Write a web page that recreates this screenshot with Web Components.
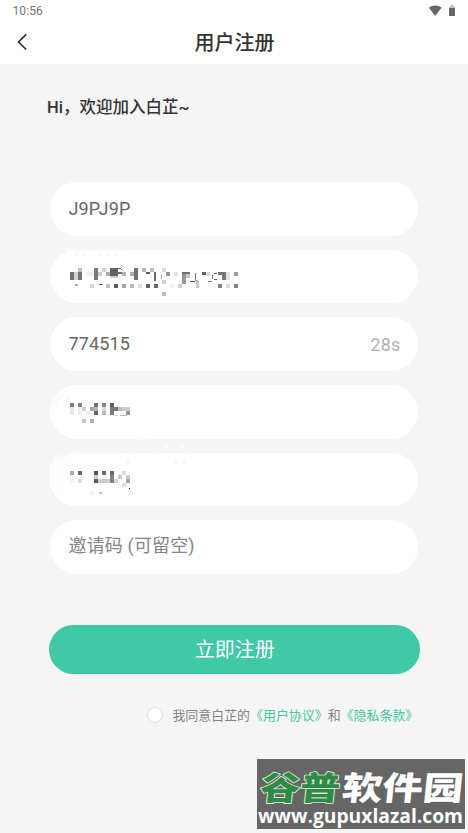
<!DOCTYPE html>
<html lang="zh-CN">
<head>
<meta charset="utf-8">
<title>用户注册</title>
<style>
html,body{margin:0;height:100%}
body{background:#f5f5f5;font-family:Roboto,"Noto Sans CJK SC",sans-serif;overflow:hidden}
</style>
</head>
<body>
<register-page></register-page>
<script>
const make = (name, html, after) => customElements.define(name, class extends HTMLElement {
  constructor() {
    super();
    this.attachShadow({ mode: 'open' }).innerHTML = html;
  }
  connectedCallback() { if (after) after(this, this.shadowRoot); }
});

make('status-bar', `<style>
:host{display:flex;height:20px;box-sizing:border-box;padding:1px 12px 0 12.5px;align-items:center;justify-content:space-between;background:#fff;color:#757575;font-size:12px;letter-spacing:.1px}
svg{display:block}
</style><span>10:56</span>
<svg width="28" height="14" viewBox="0 0 28 14"><path d="M.8 3.5Q7.2-.7 13.7 3.5L7.2 12Z" fill="#666"/><path d="M21.2 2.8h1.5V1h2.8v1.8H27V5h-5.8Z" fill="#bbb"/><rect x="21" y="4" width="6" height="8" rx=".6" fill="#666"/></svg>`);

make('title-bar', `<style>
:host{display:grid;grid-template-columns:60px 1fr 60px;height:44px;align-items:center;background:#fff;color:#333}
h1{margin:0;text-align:center;font-size:20px;line-height:42px;padding:2px 0 0 1px;font-weight:500}
svg{display:block;margin-left:16px}
</style><svg width="13" height="18" viewBox="0 0 13 18"><path d="M10.2 1.3 2.5 9l7.7 7.5" fill="none" stroke="#333" stroke-width="1.7"/></svg><h1><slot></slot></h1>`);

make('form-field', `<style>
:host{display:flex;box-sizing:border-box;height:53.6px;border-radius:27px;background:#fff;padding:0 17.5px 0 18.5px;align-items:center;justify-content:space-between;color:#666;font-size:18px;line-height:26px;letter-spacing:.15px;position:relative}
:host([placeholder]){color:#858585;padding-bottom:2px}
.end{color:#b2b2b2;padding-top:1px}
</style><span><slot></slot></span><span class="end"><slot name="end"></slot></span>`);

/* Mosaic cells: "x y w h grey" in page units, relative to the field's left and top corner. */
const mosaics = {
  account: `16 -2 14 3 249,32 -2 40 3 249,25 2 4 4 249,32 2 4 4 249,48 2 4 4 249,56 2 4 4 249,64 2 4 4 249,
20 22 4 8 112,24 22 4 8 210,28 18 4 4 190,28 22 4 8 116,25 34 3 2 170,36 22 8 4 240,44 18 4 12 120,48 22 4 4 205,52 18 4 4 210,56 22 4 4 175,60 18 8 8 100,60 26 8 2 205,68 18 3 1 90,68 22 4 2 110,71 19 1 1 90,72 22 4 4 180,80 22 4 4 175,84 18 4 12 115,92 18 4 4 185,96 22 4 2 90,100 18 4 4 190,104 22 2 9 105,
40 34 4 4 215,49 34 4 1 100,56 34 4 4 195,64 34 4 4 95,72 34 4 4 165,80 34 4 4 185,88 34 4 4 225,96 34 4 4 100,104 34 4 4 105,
112 18 4 4 220,116 22 4 4 150,112 30 4 4 210,111 24 1 5 175,112 42 4 4 190,120 34 4 4 240,128 34 4 4 205,124 22 4 4 225,132 22 8 2 110,132 24 4 10 150,136 24 4 4 200,145 23 1 7 120,140 31 5 1 100,145 30 3 1 160,146 31 3 7 200,152 22 4 3 100,156 22 4 4 220,158 31 4 1 120,164 23 3 1 110,162 25 1 4 130,164 29 3 1 100,168 22 8 3 115,172 25 4 5 120,176 22 4 8 225,184 22 4 4 155,168 34 4 4 130,176 34 4 4 220,184 34 4 4 130`,
  password: `0 20 4 12 252,2 12 6 8 250,8 11 4 4 251,16 11 4 4 251,88 51 8 4 252,
20 18 4 4 125,28 18 4 4 130,20 22 4 8 232,28 22 4 8 240,32 22 4 4 210,36 26 4 4 238,40 22 4 4 165,44 18 4 4 115,44 22 4 4 180,44 26 4 4 100,52 18 4 4 130,52 22 4 4 220,52 26 4 4 185,60 18 4 4 95,60 22 8 4 120,60 26 4 4 125,68 22 4 4 190,72 22 8 4 205,76 26 4 4 150,64 30 4 1 220,70 30 7 1 190,32 34 4 4 200,40 34 4 4 175`,
  confirm: `4 2 8 8 251,0 10 5 25 251,4 8 12 32 254,12 3 7 20 254,20 -1 8 4 250,36 -1 10 3 250,50 -1 14 3 250,80 -1 5 3 250,104 -1 4 3 250,114 -9 4 4 252,130 -9 4 4 252,136 -1 6 3 251,
76 7 4 4 250,124 7 4 4 249,132 7 4 4 250,
20 18 4 4 175,28 18 4 4 105,20 26 4 4 243,28 26 4 4 220,44 18 4 4 85,44 22 4 4 205,44 26 4 4 90,52 18 4 4 110,60 18 4 4 105,60 22 4 8 130,48 26 12 4 205,64 26 4 4 215,68 22 4 4 200,72 18 4 4 220,76 22 4 4 205,76 26 4 4 165,72 30 4 4 220,79 35 1 1 30,49 39 3 2 195,40 38 4 4 244`
};
make('mosaic-text', `<style>
:host{display:block;position:absolute;left:0;top:0;width:100%;height:100%}
svg{display:block;width:100%;height:100%;overflow:visible}
</style><svg shape-rendering="crispEdges" aria-hidden="true"></svg>`, (el, root) => {
  root.querySelector('svg').innerHTML = mosaics[el.getAttribute('kind')].split(',').map(c => {
    const [x, y, w, h, g] = c.trim().split(' ');
    return `<rect x="${x}" y="${y}" width="${w}" height="${h}" fill="rgb(${g} ${g} ${g})"/>`;
  }).join('');
});

make('submit-button', `<style>
:host{display:flex;height:49px;border-radius:25px;background:#3fc9a5;color:#fff;font-size:20px;line-height:30px;box-sizing:border-box;padding:0 0 0 1px;align-items:center;justify-content:center}
</style><slot></slot>`);

make('agreement-line', `<style>
:host{display:flex;align-items:center;color:#858585;font-family:"Noto Sans CJK SC",sans-serif;font-size:12.95px;line-height:20px;white-space:nowrap}
i{width:14px;height:14px;border:1px solid #ddd;border-radius:50%;background:#fff;margin-right:9.7px}
b{font-weight:400;color:#3fc9a5}
</style><i></i><span>我同意白芷的<b>《用户协议》</b>和<b>《隐私条款》</b></span>`);

make('site-watermark', `<style>
:host{display:block;width:212px;height:74px}
svg{display:block;overflow:visible}
text{font-family:"Noto Sans CJK SC",sans-serif;font-weight:900}
.url{font-family:"Open Sans","Noto Sans",sans-serif;font-weight:700}
</style><svg width="212" height="74" viewBox="0 0 212 74">
<rect x="1" y="0" width="208" height="70" fill="#666"/>
<g transform="translate(3 41) skewX(-6)">
<text font-size="39" textLength="80" lengthAdjust="spacingAndGlyphs" transform="scale(1 .84)" fill="#2f8a43" stroke="#dcebdc" stroke-width="2" paint-order="stroke" stroke-linejoin="round">谷普</text>
<text x="82" font-size="39" textLength="121" lengthAdjust="spacingAndGlyphs" transform="scale(1 .84)" fill="#fff">软件园</text>
</g>
<text class="url" x="2" y="63.5" font-size="19.5" textLength="205" lengthAdjust="spacingAndGlyphs" fill="#fff">www.gupuxlazal.com</text>
</svg>`);

make('register-page', `<style>
:host{display:block;width:468px;height:833px;position:relative;background:#f5f5f5}
h2{margin:0;padding:31.5px 47px 0;font-size:16.5px;line-height:24px;font-weight:500;color:#333}
form{display:grid;gap:14.1px;margin:62.5px 50px 0}
submit-button{margin:51px 48.5px 0 49px}
agreement-line{margin:31px 0 0 146.7px}
site-watermark{position:absolute;left:256px;top:759px}
</style>
<status-bar></status-bar>
<title-bar>用户注册</title-bar>
<h2>Hi，欢迎加入白芷~</h2>
<form>
<form-field>J9PJ9P</form-field>
<form-field><mosaic-text kind="account"></mosaic-text></form-field>
<form-field>774515<span slot="end">28s</span></form-field>
<form-field><mosaic-text kind="password"></mosaic-text></form-field>
<form-field><mosaic-text kind="confirm"></mosaic-text></form-field>
<form-field placeholder>邀请码 (可留空)</form-field>
</form>
<submit-button>立即注册</submit-button>
<agreement-line></agreement-line>
<site-watermark></site-watermark>`);
</script>
</body>
</html>
